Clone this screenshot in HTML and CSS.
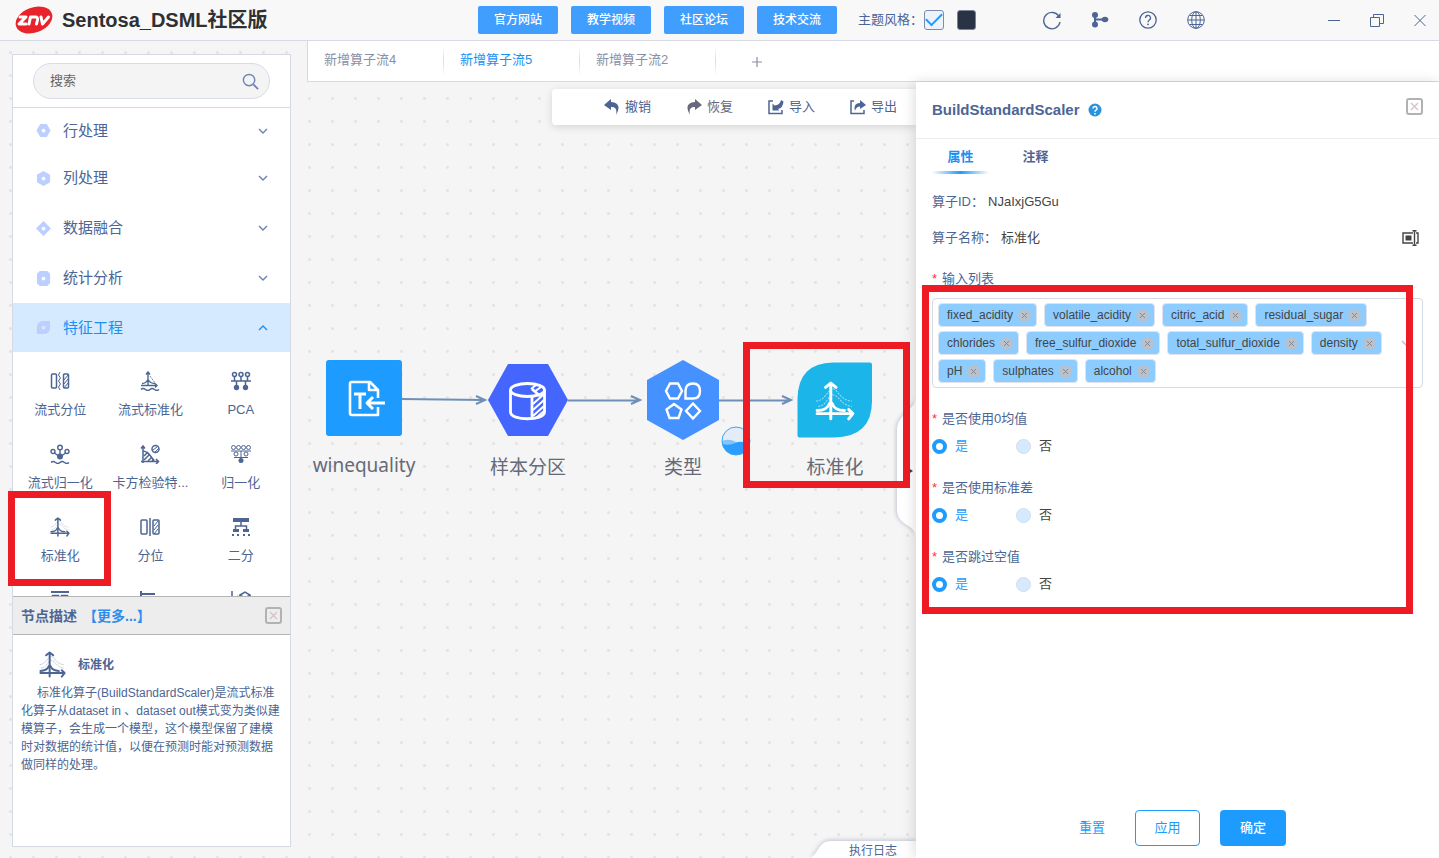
FILE: index.html
```html
<!DOCTYPE html>
<html lang="zh-CN">
<head>
<meta charset="utf-8">
<title>Sentosa_DSML社区版</title>
<link rel="stylesheet" href="styles.css">
</head>
<body>
<svg class="defs" aria-hidden="true">
  <symbol id="i-scaler" viewBox="-1 -1 38 38">
    <g fill="none" stroke="currentColor" stroke-linecap="round" stroke-linejoin="round">
      <g stroke-width="2.800"><path d="M14 1v34M9 5l5-4 5 4M1 30h34M31 26l4 4-4 5"/><path d="M1 27C8 27 11 25 13 20h2c2 5 5 7 12 7"/></g>
      <path stroke-width="1" stroke-opacity=".55" stroke-dasharray="2 1" stroke-linecap="butt" d="M0 18c8 0 10-9 16-12 5 2 8 12 18 12M2 23c8 0 9-10 14-11 6 1 9 11 18 11"/>
    </g>
  </symbol>
  <symbol id="i-down" viewBox="0 0 12 8"><path d="M2 2l4 4 4-4" fill="none" stroke="currentColor" stroke-width="1.400"/></symbol>
  <symbol id="i-x" viewBox="0 0 13 13"><circle cx="6.500" cy="6.500" r="6.500" fill="#b9c1cc"/><path d="M4 4l5 5M9 4l-5 5" stroke="#858b96"/></symbol>
  <symbol id="i-close" viewBox="0 0 17 17"><rect x="1" y="1" width="15" height="15" rx="2" fill="none" stroke="#b2b2b2" stroke-width="2"/><path d="M5 5l7 7M12 5l-7 7" stroke="#d6c4c4" stroke-width="1.400"/></symbol>
</svg>

<header class="topbar">
  <div class="brand">
    <svg class="logo" viewBox="0 0 38 30" aria-hidden="true"><ellipse cx="19" cy="15" rx="19" ry="12.500" transform="rotate(-20 19 15)" fill="#e9232c"/><g fill="none" stroke="#fff" stroke-width="3" stroke-linejoin="round" stroke-linecap="round"><path d="M5 12h6l-7 7h7M14 19l1.500-7h5q2.500 0 2 3l-1 4M26 12l1.500 7 6-7"/></g></svg>
    <h1>Sentosa_DSML社区版</h1>
  </div>
  <nav class="links"><button>官方网站</button><button>教学视频</button><button>社区论坛</button><button>技术交流</button></nav>
  <div class="theme"><span>主题风格：</span>
    <input type="checkbox" class="light" aria-label="浅色" checked>
    <input type="checkbox" class="dark" aria-label="深色">
  </div>
  <div class="utils">
    <button aria-label="刷新"><svg viewBox="0 0 20 20"><path d="M17 6.500A8.200 8.200 0 1 0 18 12" fill="none" stroke="currentColor" stroke-width="1.400"/><path d="M18.500 3v5h-5z" fill="currentColor"/></svg></button>
    <button aria-label="流程"><svg viewBox="0 0 20 20"><g fill="currentColor"><circle cx="5" cy="5" r="3"/><circle cx="5" cy="14.500" r="3"/><ellipse cx="15" cy="9.500" rx="3.300" ry="2.700"/></g><path d="M5 5v9M5 9.500h9" stroke="currentColor" stroke-width="2"/></svg></button>
    <button aria-label="帮助"><svg viewBox="0 0 20 20"><g fill="none" stroke="currentColor" stroke-width="1.300"><circle cx="10" cy="10" r="8.200"/><path d="M7.500 8a2.500 2.500 0 1 1 3.600 2.200Q10 11 10 12.300"/></g><circle cx="10" cy="14.300" r=".9" fill="currentColor"/></svg></button>
    <button aria-label="语言"><svg viewBox="0 0 20 20"><g fill="none" stroke="currentColor" stroke-width="1"><circle cx="10" cy="10" r="8.300"/><ellipse cx="10" cy="10" rx="4.300" ry="8.300"/><path d="M10 2v16M2 10h16M3.500 5.500h13M3.500 14.500h13"/></g></svg></button>
  </div>
  <div class="window-controls">
    <button aria-label="最小化"><svg viewBox="0 0 14 14"><path d="M1 7.500h12" stroke="currentColor"/></svg></button>
    <button aria-label="还原"><svg viewBox="0 0 14 14"><path d="M.5 4.500h9v9h-9zM3.500 4.500v-3h10v9h-4" fill="none" stroke="currentColor"/></svg></button>
    <button aria-label="关闭"><svg viewBox="0 0 14 14"><path d="M1.500 2l11 11M12.500 2l-11 11" stroke="currentColor"/></svg></button>
  </div>
</header>

<div class="app">
  <aside class="sidebar">
    <div class="search"><label><input type="text" placeholder="搜索" aria-label="搜索"><svg viewBox="0 0 18 18"><g fill="none" stroke="currentColor" stroke-width="1.500"><circle cx="7.500" cy="7.500" r="6"/><path d="M12 12l5 5" stroke-width="2"/></g></svg></label></div>
    <div class="palette">
      <button class="category"><svg viewBox="0 0 16 16"><path d="M4.500 1h7L15.500 8l-4 7h-7L.500 8z"/><circle cx="8" cy="8" r="2"/></svg><span>行处理</span><svg class="chev"><use href="#i-down"/></svg></button>
      <button class="category"><svg viewBox="0 0 16 16"><path d="M8 0l7 4v8l-7 4-7-4V4z"/><circle cx="8" cy="8" r="2"/></svg><span>列处理</span><svg class="chev"><use href="#i-down"/></svg></button>
      <button class="category"><svg viewBox="0 0 16 16"><path d="M8 0l8 8-8 8-8-8z"/><circle cx="8" cy="8" r="2"/></svg><span>数据融合</span><svg class="chev"><use href="#i-down"/></svg></button>
      <button class="category"><svg viewBox="0 0 16 16"><path d="M4 0h8l3 3v10l-3 3H4l-3-3V3z"/><circle cx="8" cy="8" r="2"/></svg><span>统计分析</span><svg class="chev"><use href="#i-down"/></svg></button>
      <button class="category active"><svg viewBox="0 0 16 16"><path d="M8 1h7v7q0 7-7 7H1V8q0-7 7-7z"/><circle cx="8" cy="8" r="2"/></svg><span>特征工程</span><svg class="chev up"><use href="#i-down"/></svg></button>
      <div class="tools">
        <button><svg viewBox="0 0 20 20"><g fill="none" stroke="currentColor" stroke-width="1.500"><rect x="1.500" y="3" width="5" height="14" rx="1"/><rect x="13.500" y="3" width="5" height="14" rx="1"/><path d="M10 1l-1.500 3 2 3-2 3 2 3-2 3 1.500 3" stroke-width="1"/><path d="M14 9l4-5M14 13l4-5M14 17l4-5" stroke-width="1"/></g></svg><span>流式分位</span></button>
        <button><svg viewBox="0 0 20 20"><g fill="none" stroke="currentColor" stroke-width="1.400"><path d="M8 1v14M6 3.500L8 1l2 2.500M1 14.500h16M15 12.500l2 2-2 2M2 12.500q4 0 6-4 2 4 7 4"/><path d="M1 18.500q2-2 4.500 0t4.500 0 4.500 0 4.500 0" /><path d="M10 5l5 7" stroke-width=".8" stroke-dasharray="2 1"/></g></svg><span>流式标准化</span></button>
        <button><svg viewBox="0 0 20 20"><g fill="none" stroke="currentColor" stroke-width="1.500"><circle cx="3.500" cy="3.500" r="2"/><circle cx="10" cy="3.500" r="2"/><circle cx="16.500" cy="3.500" r="2"/><path d="M0 10h20M3.500 6v4M10 6v4M16.500 6v4M5.500 10v5M14.500 10v5"/></g><g fill="currentColor"><circle cx="5.500" cy="16.500" r="2.700"/><circle cx="14.500" cy="16.500" r="2.700"/></g></svg><span>PCA</span></button>
        <button><svg viewBox="0 0 20 20"><g fill="none" stroke="currentColor" stroke-width="1.400"><circle cx="3" cy="7.500" r="2"/><circle cx="10" cy="3.500" r="2.300"/><circle cx="17" cy="7.500" r="2"/><path d="M4.500 9l4 3M15.500 9l-4 3M10 6v5M1 18.500q2-2 4.500 0t4.500 0 4.500 0 4.500 0"/></g><circle cx="10" cy="12.500" r="3" fill="currentColor"/></svg><span>流式归一化</span></button>
        <button><svg viewBox="0 0 20 20"><g fill="none" stroke="currentColor" stroke-width="1.500"><path d="M3 19V2M1 4.500L3 2l2 2.500M1 17.500h17M16 15l2.500 2.500L16 20M3 7q5 0 11 10"/><path d="M4 12l4-4M4 16l6-6M8 17l4-4M12 17l2-2"/><circle cx="15.500" cy="5" r="3.500"/><path d="M13 6l4-3M15 8l4-4" stroke-width="1"/></g></svg><span>卡方检验特...</span></button>
        <button><svg viewBox="0 0 20 20"><g fill="none" stroke="currentColor"><circle cx="2.500" cy="3.500" r="2"/><circle cx="7.500" cy="3.500" r="2"/><circle cx="12.500" cy="3.500" r="2"/><circle cx="17.500" cy="3.500" r="2"/><circle cx="5" cy="10" r="2"/><circle cx="15" cy="10" r="2"/><path d="M0 7h20M3 13.500h14M10 7v8"/></g><circle cx="10" cy="16.500" r="2.500" fill="currentColor"/></svg><span>归一化</span></button>
        <button><svg><use href="#i-scaler"/></svg><span>标准化</span></button>
        <button><svg viewBox="0 0 20 20"><g fill="none" stroke="currentColor" stroke-width="1.500"><rect x="1" y="3" width="6" height="14" rx="1"/><rect x="13" y="3" width="6" height="14" rx="1"/><path d="M10 1v18"/><path d="M14 9l4-5M14 13l4-5M14 17l4-5" stroke-width="1"/></g></svg><span>分位</span></button>
        <button><svg viewBox="0 0 20 20"><path d="M2 1h16v4H2zM2 12h6v3H2zM12 12h6v3h-6zM1 17h2v2H1zM6 17h2v2H6zM12 17h2v2h-2zM17 17h2v2h-2z" fill="currentColor"/><path d="M10 4v5M4.500 12V9h11v3" fill="none" stroke="currentColor" stroke-width="1.500"/></svg><span>二分</span></button>
        <button aria-label="更多算子"><svg viewBox="0 0 20 20"><path d="M1 2h18" stroke="currentColor" stroke-width="2"/><g fill="none" stroke="currentColor" stroke-width="1.500"><rect x="2.500" y="5.500" width="6" height="5"/><rect x="11.500" y="5.500" width="6" height="5"/></g></svg></button>
        <button aria-label="更多算子"><svg viewBox="0 0 20 20"><path d="M1 1v12M1 4h14" stroke="currentColor" stroke-width="2"/></svg></button>
        <button aria-label="更多算子"><svg viewBox="0 0 20 20"><path d="M1 1v12M9 5l5-3 5 3-5 3zM9 5v6M19 5v6M4 9l3-3" fill="none" stroke="currentColor" stroke-width="1.500"/></svg></button>
      </div>
    </div>
    <section class="about">
      <header><h2>节点描述<a href="#more">【更多...】</a></h2><button aria-label="关闭描述"><svg><use href="#i-close"/></svg></button></header>
      <h3><svg><use href="#i-scaler"/></svg>标准化</h3>
      <p>标准化算子(BuildStandardScaler)是流式标准化算子从dataset in 、dataset out模式变为类似建模算子，会生成一个模型，这个模型保留了建模时对数据的统计值，以便在预测时能对预测数据做同样的处理。</p>
    </section>
    <div class="mark mark-tool"></div>
  </aside>

  <main class="workspace">
    <nav class="flow-tabs"><button>新增算子流4</button><button class="current">新增算子流5</button><button>新增算子流2</button><button class="add" aria-label="新增"><svg viewBox="0 0 12 12"><path d="M6 1v10M1 6h10" stroke="currentColor" stroke-width="1.200"/></svg></button></nav>
    <div class="stage">
      <section class="canvas">
        <div class="toolbar">
          <button><svg viewBox="0 0 16 16"><path d="M7 0L0 6l7 5V8q7-.5 5 8 7-12-5-13z" fill="currentColor"/></svg>撤销</button>
          <button class="redo"><svg viewBox="0 0 16 16"><path d="M9 0l7 6-7 5V8Q2 7.500 4 16-3 4 9 3z" fill="currentColor"/></svg>恢复</button>
          <button><svg viewBox="0 0 16 16"><path d="M5 2H1v12.500h13V11" fill="none" stroke="currentColor" stroke-width="1.500"/><path d="M4.500 11.500V4.500l2 2Q12 6 13 1l2.500 1.500Q15 9 10 10l1.500 1.500z" fill="currentColor"/></svg>导入</button>
          <button><svg viewBox="0 0 16 16"><path d="M4 2H1v12.500h13V11" fill="none" stroke="currentColor" stroke-width="1.500"/><path d="M10 1l6 5-6 4V7.500Q6 7.500 5 12 3 4 10 4z" fill="currentColor"/></svg>导出</button>
        </div>
        <svg class="edges" viewBox="0 0 608 500" aria-hidden="true"><g fill="none" stroke="#6e8fb8" stroke-width="2"><path d="M93 317l83 1M168 314l9 4-9 4M260 318.500h71M323 314l9 4-9 4M411 318.500h71M474 314l9 4-9 4"/></g></svg>
        <div class="node n1"><svg viewBox="0 0 76 76"><rect width="76" height="76" rx="3" fill="#1e9bff"/><g fill="none" stroke="#fff" stroke-width="2.600" stroke-linejoin="round"><path d="M52 38V30L44 22H26q-2 0-2 2v29q0 2 2 2h26v-8M43 22v8h8"/><path stroke-width="3" d="M28 34h12M34 34v15M59 43H41M47 37l-6 6 6 6"/></g></svg><span>winequality</span></div>
        <div class="node n2"><svg viewBox="0 0 82 76"><path d="M21 2h40l20 36-20 36H21L1 38z" fill="#4565ff"/><g fill="none" stroke="#fff" stroke-width="2.800"><ellipse cx="40.500" cy="28" rx="17" ry="6.500"/><path d="M23.500 28v22c0 9 34 9 34 0V28M45 34v21M45 27l8 7"/><path stroke-width="2" d="M46 42l11-10M46 48l11-10M46 54l11-10M49 56l8-7M44 27l5-4M47 30l7-5"/></g></svg><span>样本分区</span></div>
        <div class="node n3"><svg viewBox="0 0 74 82"><path d="M37 1l36 20v40L37 81 1 61V21z" fill="#4591ff"/><g fill="none" stroke="#fff" stroke-width="2.400"><path d="M24 24.500h8l4 7.500-4 7.500h-8L20 32zM47 24.500q7 0 7 7.500t-7 7.500h-7.500V32q0-7.500 7.500-7.500zM28 45l7.500 5.500-3 8.500h-9l-3-8.500zM47 44.500l7 7.500-7 7.500-7-7.500z"/></g></svg><span>类型</span></div>
        <svg class="progress" viewBox="0 0 30 30" aria-hidden="true"><circle cx="15" cy="15" r="14" fill="#e2edf7"/><path d="M1 15q7-3 14 1t14-1a14 14 0 0 1-28 0z" fill="#83c5fa"/><path d="M1.300 18q7 2 13-1t14.400 1a14 14 0 0 1-27.400 0z" fill="#2a9dff"/><circle cx="15" cy="15" r="14" fill="none" stroke="#37a4fb"/></svg>
        <div class="node n4"><svg viewBox="0 0 76 76"><path d="M36 .5h37q2 0 2 2V39q0 36-38 36.500H2.500q-2 0-2-2V37Q1 1 36 .5z" fill="#1cb5e9"/><svg x="18" y="19" width="40" height="40" class="white"><use href="#i-scaler"/></svg></svg><span>标准化</span></div>
        <svg class="handle" viewBox="0 0 30 150" aria-hidden="true"><path d="M30 10c0 13-19 16-19 34v78c0 11 6 13 13 18 4 3 6 6 6 10z" fill="#fff"/><path d="M24 82l3 2-3 2z" fill="#444"/></svg>
        <button class="log-tab"><svg viewBox="0 0 110 20" aria-hidden="true"><path d="M5 20c8-6 8-17 20-17h85v17z" fill="#fff"/></svg><span>执行日志</span></button>
        <div class="mark mark-node"></div>
      </section>

      <aside class="drawer">
        <header><h2>BuildStandardScaler</h2><svg class="tip" viewBox="0 0 14 14"><circle cx="7" cy="7" r="6.500" fill="#2d92dd"/><path d="M5 5.500a2 2 0 1 1 3 1.700q-1 .5-1 1.500M7 10v1.500" fill="none" stroke="#fff" stroke-width="1.500"/></svg><button aria-label="关闭"><svg><use href="#i-close"/></svg></button></header>
        <nav class="panel-tabs"><button class="current">属性</button><button>注释</button></nav>
        <form>
          <div class="fact"><span>算子ID：</span><b>NJaIxjG5Gu</b></div>
          <div class="fact"><span>算子名称：</span><b>标准化</b><button type="button" aria-label="重命名"><svg viewBox="0 0 18 16"><g fill="none" stroke="#444" stroke-width="1.400"><path d="M11 3H1v10h10M14 3h2v10h-2M10.500 .7h4M10.500 15.300h4M12.500 1v14"/></g><path d="M3.500 5.500h6v5h-6z" fill="#444"/></svg></button></div>
          <div class="field-name">输入列表</div>
          <div class="multi">
            <div class="chips">
              <span>fixed_acidity<button type="button" aria-label="移除 fixed_acidity"><svg><use href="#i-x"/></svg></button></span>
              <span>volatile_acidity<button type="button" aria-label="移除 volatile_acidity"><svg><use href="#i-x"/></svg></button></span>
              <span>citric_acid<button type="button" aria-label="移除 citric_acid"><svg><use href="#i-x"/></svg></button></span>
              <span>residual_sugar<button type="button" aria-label="移除 residual_sugar"><svg><use href="#i-x"/></svg></button></span>
              <span>chlorides<button type="button" aria-label="移除 chlorides"><svg><use href="#i-x"/></svg></button></span>
              <span>free_sulfur_dioxide<button type="button" aria-label="移除 free_sulfur_dioxide"><svg><use href="#i-x"/></svg></button></span>
              <span>total_sulfur_dioxide<button type="button" aria-label="移除 total_sulfur_dioxide"><svg><use href="#i-x"/></svg></button></span>
              <span>density<button type="button" aria-label="移除 density"><svg><use href="#i-x"/></svg></button></span>
              <span>pH<button type="button" aria-label="移除 pH"><svg><use href="#i-x"/></svg></button></span>
              <span>sulphates<button type="button" aria-label="移除 sulphates"><svg><use href="#i-x"/></svg></button></span>
              <span>alcohol<button type="button" aria-label="移除 alcohol"><svg><use href="#i-x"/></svg></button></span>
            </div>
            <button type="button" class="open" aria-label="展开列表"><svg><use href="#i-down"/></svg></button>
          </div>
          <fieldset><legend class="field-name">是否使用0均值</legend><div class="choices"><label><input type="radio" name="mean" checked><span>是</span></label><label><input type="radio" name="mean"><span>否</span></label></div></fieldset>
          <fieldset><legend class="field-name">是否使用标准差</legend><div class="choices"><label><input type="radio" name="std" checked><span>是</span></label><label><input type="radio" name="std"><span>否</span></label></div></fieldset>
          <fieldset><legend class="field-name">是否跳过空值</legend><div class="choices"><label><input type="radio" name="skip" checked><span>是</span></label><label><input type="radio" name="skip"><span>否</span></label></div></fieldset>
        </form>
        <footer><button>重置</button><button class="outline">应用</button><button class="solid">确定</button></footer>
        <div class="mark mark-form"></div>
      </aside>
    </div>
  </main>
</div>
</body>
</html>
```

FILE: styles.css
```css
* { box-sizing: border-box; margin: 0; padding: 0; }
body {
  height: 100vh;
  display: flex;
  flex-direction: column;
  overflow: hidden;
  font: 13px/18px "Liberation Sans", "Noto Sans CJK SC", sans-serif;
  color: #4c6594;
  background: #f5f5f5 radial-gradient(circle at 50% 50%, #e3e4e6 0, #e3e4e6 1px, transparent 2px) -1px -5px / 23px 23px;
}
button { border: 0; background: none; font: inherit; color: inherit; cursor: pointer; }
svg { display: block; flex: none; }
h1, h2, h3, b { font-weight: normal; }
.defs { position: absolute; width: 0; height: 0; }

/* Top bar */
.topbar { flex: none; height: 41px; display: flex; align-items: center; background: #f8f8f8; border-bottom: 1px solid #d7dae3; color: #4c6594; }
.brand { flex: 1; display: flex; align-items: center; gap: 9px; padding-left: 15px; }
.logo { width: 38px; height: 30px; }
.brand h1 { font-size: 20px; line-height: 28px; font-weight: bold; color: #2e3033; white-space: nowrap; }
.links { display: flex; gap: 13px; }
.links button { width: 80px; height: 28px; border-radius: 2px; background: #409eff; color: #fff; font-size: 12px; font-weight: 500; }
.theme { display: flex; align-items: center; margin-left: 21px; }
.theme span { width: 66px; white-space: nowrap; }
.theme input { appearance: none; border-radius: 3px; }
.light { width: 20px; height: 20px; border: 1px solid #7d8cad; background: #edf2fb; display: grid; place-items: center; }
.light::after { content: ""; width: 14px; height: 7px; margin-bottom: 5px; border: solid #1e9bff; border-width: 0 0 2px 2px; transform: rotate(-45deg); }
.dark { width: 19px; height: 20px; margin-left: 13px; background: #2a3245; border: 1px solid #79829a; }
.utils { display: flex; gap: 28px; margin-left: 66px; }
.utils svg { width: 20px; height: 20px; }
.window-controls { display: flex; gap: 29px; margin: 0 12px 0 121px; }
.window-controls svg { width: 14px; height: 14px; }

.app { flex: 1; min-height: 0; display: flex; }

/* Operator palette */
.sidebar { position: relative; width: 279px; margin: 13px 16px 11px 12px; flex: none; display: flex; flex-direction: column; background: #fff; border: 1px solid #d5d9e2; }
.search { flex: none; padding: 8px 20px; border-bottom: 1px solid #d5d9e2; }
.search label { display: flex; align-items: center; height: 36px; padding: 0 10px 0 16px; background: #f4f4f4; border: 1px solid #d8dbe8; border-radius: 18px; color: #7183b5; }
.search input { flex: 1; min-width: 0; border: 0; background: none; font: inherit; outline: 0; }
.search input::placeholder { color: #666; opacity: 1; }
.search svg { width: 17px; height: 17px; }
.palette { flex: 1; min-height: 0; overflow: hidden; }
.category { width: 100%; height: 50px; padding: 0 21px 0 23px; display: flex; align-items: center; gap: 12px; font-size: 15px; text-align: left; }
.category:first-child { height: 45px; }
.category span { flex: 1; }
.category svg { width: 15px; height: 15px; fill: #bdcfff; }
.category circle { fill: #fff; }
.category .chev { width: 12px; height: 8px; color: #6f80b2; }
.category.active { height: 49px; background: #d5eaff; color: #1890f5; }
.category.active circle { fill: #d5eaff; }
.category .up { color: #1890f5; transform: rotate(180deg); }
.tools { display: grid; grid-template-columns: repeat(3, 1fr); padding: 0 4px 0 2px; }
.tools button { height: 73px; display: flex; flex-direction: column; align-items: center; gap: 10px; padding-top: 19px; white-space: nowrap; }
.tools svg { width: 20px; height: 20px; }
.about { flex: none; height: 250px; }
.about header { height: 39px; display: flex; align-items: center; justify-content: space-between; padding: 0 8px; background: #ededed; border: solid #b5b5b5; border-width: 1px 0; }
.about h2 { font-size: 14px; font-weight: bold; }
.about a { margin-left: 6px; color: #2d8cf0; text-decoration: none; }
.about header svg, .drawer header button svg { width: 17px; height: 17px; }
.about h3 { display: flex; align-items: center; gap: 12px; padding: 16px 0 6px 26px; font-size: 12px; font-weight: bold; }
.about h3 svg { width: 27px; height: 27px; }
.about p { padding: 0 8px; font-size: 12px; text-indent: 16px; }

/* Flow tabs */
.workspace { flex: 1; min-width: 0; display: flex; flex-direction: column; }
.flow-tabs { height: 41px; flex: none; display: flex; background: #fff; border: solid #d7dae3; border-width: 0 0 1px 1px; color: #8990a2; }
.flow-tabs button { width: 136px; padding: 0 16px 2px; text-align: left; background: linear-gradient(#fff, #d7dae3, #fff) right 5px / 1px 30px no-repeat; }
.flow-tabs .current { color: #1890f5; }
.flow-tabs .add { width: 82px; padding: 2px 35px 0; background: none; }
.flow-tabs .add svg { width: 12px; height: 12px; }
.stage { flex: 1; min-height: 0; display: flex; }

/* Canvas */
.canvas { flex: 1; min-width: 0; position: relative; overflow: hidden; }
.toolbar { width: 364px; height: 36px; margin: 7px 0 0 auto; padding-left: 52px; display: flex; align-items: center; gap: 35px; background: #fff; border-radius: 4px 0 0 4px; box-shadow: 0 2px 8px #0002; }
.toolbar button { display: flex; align-items: center; gap: 5px; }
.toolbar svg { width: 16px; height: 16px; }
.toolbar .redo { color: #67697a; }
.edges { position: absolute; left: 1px; top: 0; width: 608px; height: 500px; }
.node { position: absolute; display: flex; flex-direction: column; align-items: center; width: 120px; color: #666a78; font: 19px/28px "Noto Sans", "Noto Sans CJK SC", sans-serif; }
.node > svg { width: 76px; height: 76px; margin-bottom: 15px; }
.node .white { color: #fff; }
.n1 { left: -3px; top: 278px; }
.n2 { left: 161px; top: 280px; }
.n3 { left: 316px; top: 277px; }
.n4 { left: 468px; top: 280px; }
.node.n2 > svg { width: 82px; }
.node.n3 > svg { width: 74px; height: 82px; margin-bottom: 12px; }
.progress { position: absolute; left: 414px; top: 344px; width: 30px; height: 30px; }
.handle { position: absolute; right: 0; top: 305px; width: 30px; height: 150px; filter: drop-shadow(-1px 0 2px #7078a066); }
.log-tab { position: absolute; right: 0; bottom: 0; width: 110px; height: 20px; }
.log-tab svg { width: 110px; height: 20px; filter: drop-shadow(0 -1px 2px #7078a066); }
.log-tab span { position: absolute; right: 19px; top: 4px; font-size: 12px; line-height: 18px; }

/* Property drawer */
.drawer { position: relative; width: 523px; flex: none; display: flex; flex-direction: column; background: #fff; box-shadow: -2px 0 12px #0002; }
.drawer header { height: 57px; flex: none; display: flex; align-items: center; gap: 8px; padding: 0 16px; border-bottom: 1px solid #ededed; }
.drawer h2 { font-size: 15px; font-weight: bold; }
.tip { width: 14px; height: 14px; }
.drawer header button { margin: 0 0 8px auto; }
.panel-tabs { display: flex; gap: 18px; padding: 0 16px; font-weight: bold; }
.panel-tabs button { width: 57px; height: 35px; }
.panel-tabs .current { color: #1890f5; background: linear-gradient(90deg, #fff, #1e9bff, #fff) bottom / 100% 3px no-repeat; }
.drawer form { flex: 1; padding: 19px 16px 0; }
.fact { display: flex; align-items: center; height: 18px; margin-bottom: 18px; }
.fact b { margin-left: 4px; color: #444; }
.fact button { margin: 0 3px 0 auto; }
.fact svg { width: 18px; height: 16px; }
.field-name { line-height: 18px; }
.field-name::before { content: "*"; color: #f33; margin-right: 5px; }
.fact + .field-name { margin: 23px 0 10px; }
.multi { display: flex; align-items: center; border: 1px solid #d5d9e6; border-radius: 4px; min-height: 90px; padding-right: 10px; }
.chips { flex: 1; display: flex; flex-wrap: wrap; gap: 4px 7px; padding: 4px 5px; }
.chips span { display: flex; align-items: center; gap: 5px; height: 24px; padding: 0 5px 0 8px; border: 1px solid #e0e3ee; border-radius: 4px; background: #8dccff; color: #444; font-size: 12px; }
.chips svg { width: 13px; height: 13px; }
.open { color: #b9bdc8; }
.open svg { width: 12px; height: 8px; }
.drawer fieldset { border: 0; margin-bottom: 24px; }
.multi + fieldset { margin-top: 22px; }
.choices { display: flex; gap: 48px; padding-top: 9px; }
.choices label { display: flex; align-items: center; gap: 8px; color: #444; }
.choices input { appearance: none; width: 15px; height: 15px; border: 1px solid #d2dced; border-radius: 50%; background: #d5eaff; }
.choices input:checked { border: 4px solid #1e9bff; background: #fff; }
.choices input:checked + span { color: #1e9bff; }
.drawer footer { display: flex; justify-content: center; gap: 20px; padding-bottom: 12px; color: #1e9bff; }
.drawer footer button { height: 36px; padding: 0 10px; border-radius: 4px; }
.drawer footer .outline { width: 65px; border: 1px solid #1e9bff; }
.drawer footer .solid { width: 66px; background: #1e9bff; color: #fff; font-weight: 500; }

/* Red highlight frames laid over the interface */
.mark { position: absolute; border: 7px solid #ed1c24; pointer-events: none; }
.mark-tool { left: -5px; top: 436px; width: 103px; height: 95px; }
.mark-node { right: 6px; top: 260px; width: 167px; height: 146px; }
.mark-form { left: 6px; top: 203px; width: 491px; height: 329px; }
```
